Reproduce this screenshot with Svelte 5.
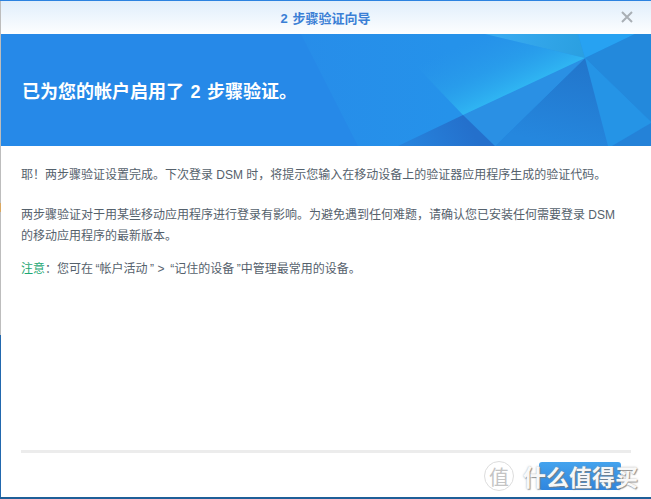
<script>
  const polys = [
    { points: "301,34 651,34 651,146 358,146", fill: "url(#sheen)" },
    { points: "485,34 578,34 585,58", fill: "url(#cap)" },
    { points: "578,34 635,34 585,58", fill: "#27a2f2" },
    { points: "635,34 651,34 651,122 585,58", fill: "#2389dc" },
    { points: "585,58 651,122 651,123 612,146 608,146", fill: "#2594e6" },
    { points: "612,146 651,123 651,146", fill: "#2482d8" },
    { points: "585,58 608,146 495,146", fill: "url(#pit)" },
    { points: "585,58 495,146 463,115", fill: "#2a90e4" },
    { points: "463,115 495,146 398,146", fill: "url(#low)" }
  ];
</script>

<div class="window">
  <header class="title-bar">
    <span class="title">2 步骤验证向导</span>
    <svg class="close" viewBox="0 0 12 12" width="12" height="12" aria-hidden="true">
      <path d="M1 1l10 10M11 1L1 11" stroke="#a9afb5" stroke-width="2" fill="none" />
    </svg>
  </header>

  <section class="banner">
    <svg class="facets" viewBox="0 34 651 112" preserveAspectRatio="none" aria-hidden="true">
      <defs>
        <linearGradient id="sheen" gradientUnits="userSpaceOnUse" x1="300" y1="0" x2="450" y2="0">
          <stop offset="0" stop-color="#278de9" />
          <stop offset="1" stop-color="#2592ea" />
        </linearGradient>
        <linearGradient id="glow" gradientUnits="userSpaceOnUse" x1="470" y1="40" x2="497" y2="98">
          <stop offset="0" stop-color="#2b9ae8" stop-opacity="0" />
          <stop offset="0.55" stop-color="#2ba6ec" stop-opacity="0.5" />
          <stop offset="1" stop-color="#2fb4f2" />
        </linearGradient>
        <linearGradient id="cap" gradientUnits="userSpaceOnUse" x1="500" y1="34" x2="585" y2="58">
          <stop offset="0" stop-color="#38aaf0" />
          <stop offset="1" stop-color="#2a9fe0" />
        </linearGradient>
        <linearGradient id="pit" gradientUnits="userSpaceOnUse" x1="580" y1="62" x2="560" y2="146">
          <stop offset="0" stop-color="#2276cc" />
          <stop offset="1" stop-color="#2587de" />
        </linearGradient>
        <linearGradient id="low" gradientUnits="userSpaceOnUse" x1="463" y1="115" x2="410" y2="146">
          <stop offset="0" stop-color="#2470cc" />
          <stop offset="1" stop-color="#2682dc" />
        </linearGradient>
      </defs>
      {#each polys as p}
        <polygon points={p.points} fill={p.fill} />
      {/each}
      <polygon points="395,44 485,34 585,58 463,115" fill="url(#glow)" />
    </svg>
    <h1>已为您的帐户启用了 2 步骤验证。</h1>
  </section>

  <main class="content">
    <p class="first">耶！两步骤验证设置完成。下次登录 DSM 时，将提示您输入在移动设备上的验证器应用程序生成的验证代码。</p>
    <p class="second">两步骤验证对于用某些移动应用程序进行登录有影响。为避免遇到任何难题，请确认您已安装任何需要登录 DSM 的移动应用程序的最新版本。</p>
    <p class="note"><span class="green">注意</span>：您可在<span class="q">“</span>帐户活动<span class="q">”</span> &gt; <span class="q">“</span>记住的设备<span class="q">”</span>中管理最常用的设备。</p>
  </main>

  <footer class="footer">
    <div class="rule"></div>
    <div class="actions">
      <button class="done" aria-label="完成"></button>
    </div>
  </footer>

  <div class="watermark">
    <span class="seal">值</span>
    <span class="mark-text">什么值得买</span>
  </div>
</div>

<style>
  :global(body) {
    margin: 0;
    background: #fff;
  }

  .window {
    position: relative;
    width: 651px;
    height: 499px;
    box-sizing: border-box;
    display: flex;
    flex-direction: column;
    overflow: hidden;
    background: #fff;
    border-top: 1px solid #2b82e0;
    border-bottom: 2px solid #1f5f98;
    font-family: "Liberation Sans", "Noto Sans CJK SC", sans-serif;
  }

  .window::before {
    content: "";
    position: absolute;
    z-index: 2;
    left: 0;
    top: 0;
    bottom: 0;
    width: 1px;
    background: linear-gradient(
      #bdbdbd 0,
      #bdbdbd 202px,
      #dba860 202px,
      #dba860 211px,
      #bdbdbd 211px,
      #bdbdbd 334px,
      #2268ae 334px
    );
  }

  .title-bar {
    height: 33px;
    flex: none;
    display: flex;
    align-items: center;
    justify-content: center;
    position: relative;
    background: linear-gradient(#e0eefb, #fdfeff);
  }

  .title {
    font-size: 13px;
    font-weight: 700;
    word-spacing: 1px;
    color: #3a7fd5;
  }

  .close {
    position: absolute;
    right: 18px;
    top: 10px;
  }

  .banner {
    position: relative;
    height: 112px;
    flex: none;
    display: flex;
    align-items: center;
    padding-left: 22px;
    background: #2689e8;
  }

  .facets {
    position: absolute;
    inset: 0;
    width: 100%;
    height: 100%;
  }

  .banner h1 {
    position: relative;
    margin: 0;
    font-size: 18px;
    font-weight: 700;
    word-spacing: 1.5px;
    color: #fff;
  }

  .content {
    flex: 1;
    padding: 0 21px;
    font-size: 12px;
    line-height: 21px;
    color: #55616c;
  }

  .content p {
    margin: 0;
  }

  .first {
    padding-top: 19px;
  }

  .second {
    padding-top: 19px;
  }

  .note {
    padding-top: 12px;
  }

  .q {
    padding-left: 2.5px;
  }

  .green {
    color: #1fa874;
  }

  .footer {
    flex: none;
    height: 47px;
    padding: 0 20px 0 21px;
  }

  .rule {
    height: 3px;
    background: #ececec;
  }

  .actions {
    display: flex;
    justify-content: flex-end;
    padding: 9px 10px 0 0;
  }

  .done {
    width: 82px;
    height: 28px;
    border: none;
    border-radius: 3px;
    background: linear-gradient(#44a3ee, #2f86e0);
  }

  .watermark {
    position: absolute;
    left: 484px;
    top: 458px;
    display: flex;
    align-items: center;
    gap: 9px;
    pointer-events: none;
  }

  .seal {
    width: 28px;
    height: 28px;
    border: 1px solid #ddd;
    border-radius: 50%;
    display: flex;
    align-items: center;
    justify-content: center;
    font-size: 20px;
    color: #c4c4c4;
  }

  .mark-text {
    font-size: 23px;
    font-weight: 700;
    color: rgba(255, 255, 255, 0.95);
    text-shadow:
      1px 1px 1px rgba(120, 120, 120, 0.75),
      0 0 2px rgba(150, 150, 150, 0.8);
  }
</style>
